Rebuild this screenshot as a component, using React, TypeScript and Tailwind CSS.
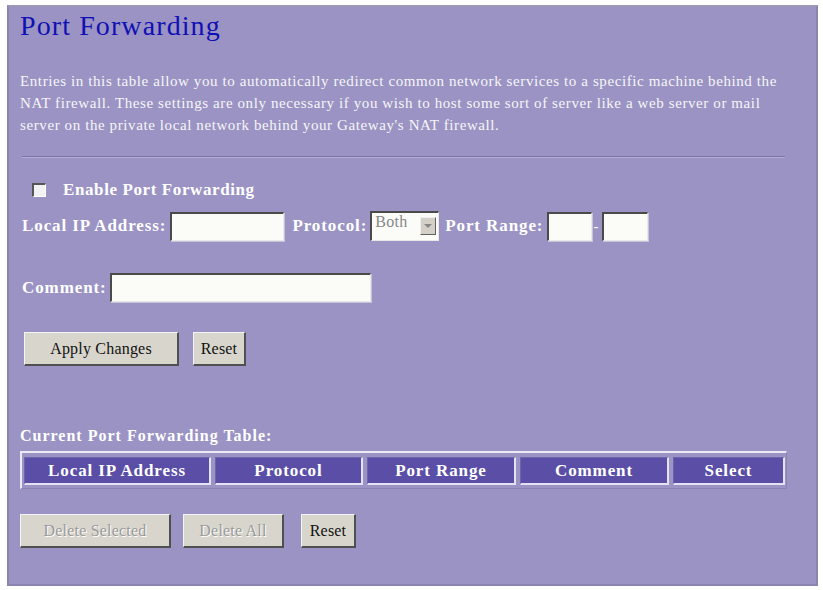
import React from "react";

const serif = { fontFamily: '"Liberation Serif", "Times New Roman", serif' };

function Inset({ w, h, className = "" }: { w: string; h: string; className?: string }) {
  return (
    <div
      className={`${w} ${h} ${className} bg-[#fbfbf8] border-t-2 border-l-2 border-b border-r border-t-[#4a4a4a] border-l-[#4a4a4a] border-b-[#e8e8e8] border-r-[#e8e8e8] shadow-[1px_1px_0_#c8c4d8]`}
    />
  );
}

function Btn({ children, w, disabled = false }: { children: React.ReactNode; w: string; disabled?: boolean }) {
  return (
    <div
      className={`${w} h-[34px] flex items-center justify-center bg-[#d8d5cd] border-t border-l border-t-[#f4f4f4] border-l-[#f4f4f4] border-b-2 border-r-2 border-b-[#505050] border-r-[#505050] text-[16px] tracking-[0.2px] ${
        disabled ? "text-[#9a9a9a] [text-shadow:1px_1px_0_#ffffff]" : "text-[#111]"
      }`}
    >
      {children}
    </div>
  );
}

function HeadCell({ children, w }: { children: React.ReactNode; w: string }) {
  return (
    <div
      className={`${w} h-[28px] flex items-center justify-center bg-[#5a4ea6] text-white font-bold text-[17px] tracking-[0.9px] border-b-2 border-r-2 border-b-[#e4e2f0] border-r-[#e4e2f0] border-t border-l border-t-[#6d64ad] border-l-[#6d64ad]`}
    >
      {children}
    </div>
  );
}

export default function App() {
  return (
    <div className="w-[823px] h-[590px] bg-white overflow-hidden" style={serif}>
      <div className="ml-[7px] mt-[5px] w-[811px] h-[581px] bg-[#9a93c4] border-2 border-[#8a84ae] border-t-[#9c98b8] pl-[11px]">
        <h1 className="text-[#1010b4] text-[28px] leading-[32px] mt-[3px] tracking-[1.1px]">Port Forwarding</h1>
        <p className="mt-[28px] text-[#f6f6f6] text-[15px] leading-[22px] whitespace-nowrap tracking-[0.6px]">
          Entries in this table allow you to automatically redirect common network services to a specific machine behind the
          <br />
          NAT firewall. These settings are only necessary if you wish to host some sort of server like a web server or mail
          <br />
          server on the private local network behind your Gateway's NAT firewall.
        </p>
        <div className="mt-[20px] ml-[2px] w-[763px] h-0 border-t border-b border-t-[#7a74a2] border-b-[#b4aed6]" />
        <div className="mt-[24px] flex items-center h-[16px]">
          <div className="ml-[12px] w-[14px] h-[14px] bg-[#f2f2f2] border-t-2 border-l-2 border-t-[#555] border-l-[#555] border-b border-r border-b-[#fff] border-r-[#fff]" />
          <span className="ml-[17px] text-white font-bold text-[17px] tracking-[0.6px]">Enable Port Forwarding</span>
        </div>
        <div className="mt-[13px] flex items-center h-[30px] text-white font-bold text-[17px] tracking-[0.9px]">
          <span className="ml-[2px]">Local IP Address:</span>
          <Inset w="w-[114px]" h="h-[29px]" className="ml-[4px]" />
          <span className="ml-[8px]">Protocol:</span>
          <div className="ml-[3px] w-[69px] h-[30px] bg-[#fbfbf8] border-t-2 border-l-2 border-t-[#4a4a4a] border-l-[#4a4a4a] border-b border-r border-b-[#e8e8e8] border-r-[#e8e8e8] flex items-start justify-between">
            <span className="text-[#888] font-normal text-[16px] leading-[16px] ml-[3px] mt-[1px] tracking-[0.3px]">Both</span>
            <div className="mt-[4px] mr-[2px] w-[16px] h-[18px] bg-[#d4d0c8] border-t border-l border-t-[#f0f0f0] border-l-[#f0f0f0] border-b border-r border-b-[#606060] border-r-[#606060] flex items-center justify-center">
              <div className="w-0 h-0 border-l-[4px] border-r-[4px] border-t-[4px] border-l-transparent border-r-transparent border-t-[#888]" />
            </div>
          </div>
          <span className="ml-[6px]">Port Range:</span>
          <Inset w="w-[45px]" h="h-[29px]" className="ml-[4px]" />
          <span className="mx-[1px] font-normal text-[15px]">-</span>
          <Inset w="w-[46px]" h="h-[29px]" className="ml-[2px]" />
        </div>
        <div className="mt-[32px] flex items-center h-[29px] text-white font-bold text-[17px] tracking-[0.9px]">
          <span className="ml-[2px]">Comment:</span>
          <Inset w="w-[261px]" h="h-[29px]" className="ml-[3px]" />
        </div>
        <div className="mt-[30px] ml-[4px] flex items-center gap-[14px]">
          <Btn w="w-[155px]">Apply Changes</Btn>
          <Btn w="w-[53px]">Reset</Btn>
        </div>
        <div className="mt-[61px] text-white font-bold text-[16px] leading-[18px] tracking-[1px]">Current Port Forwarding Table:</div>
        <div className="mt-[6px] w-[767px] h-[38px] border-t-2 border-l-2 border-t-[#ece9f6] border-l-[#ece9f6] border-b border-r border-b-[#8a84b0] border-r-[#8a84b0] pt-[4px] pl-[2px] flex gap-[4px]">
          <HeadCell w="w-[187px]">Local IP Address</HeadCell>
          <HeadCell w="w-[148px]">Protocol</HeadCell>
          <HeadCell w="w-[149px]">Port Range</HeadCell>
          <HeadCell w="w-[149px]">Comment</HeadCell>
          <HeadCell w="w-[112px]">Select</HeadCell>
        </div>
        <div className="mt-[25px] ml-[0px] flex items-center">
          <Btn w="w-[151px]" disabled>Delete Selected</Btn>
          <div className="ml-[12px]"><Btn w="w-[101px]" disabled>Delete All</Btn></div>
          <div className="ml-[17px]"><Btn w="w-[55px]">Reset</Btn></div>
        </div>
      </div>
    </div>
  );
}
